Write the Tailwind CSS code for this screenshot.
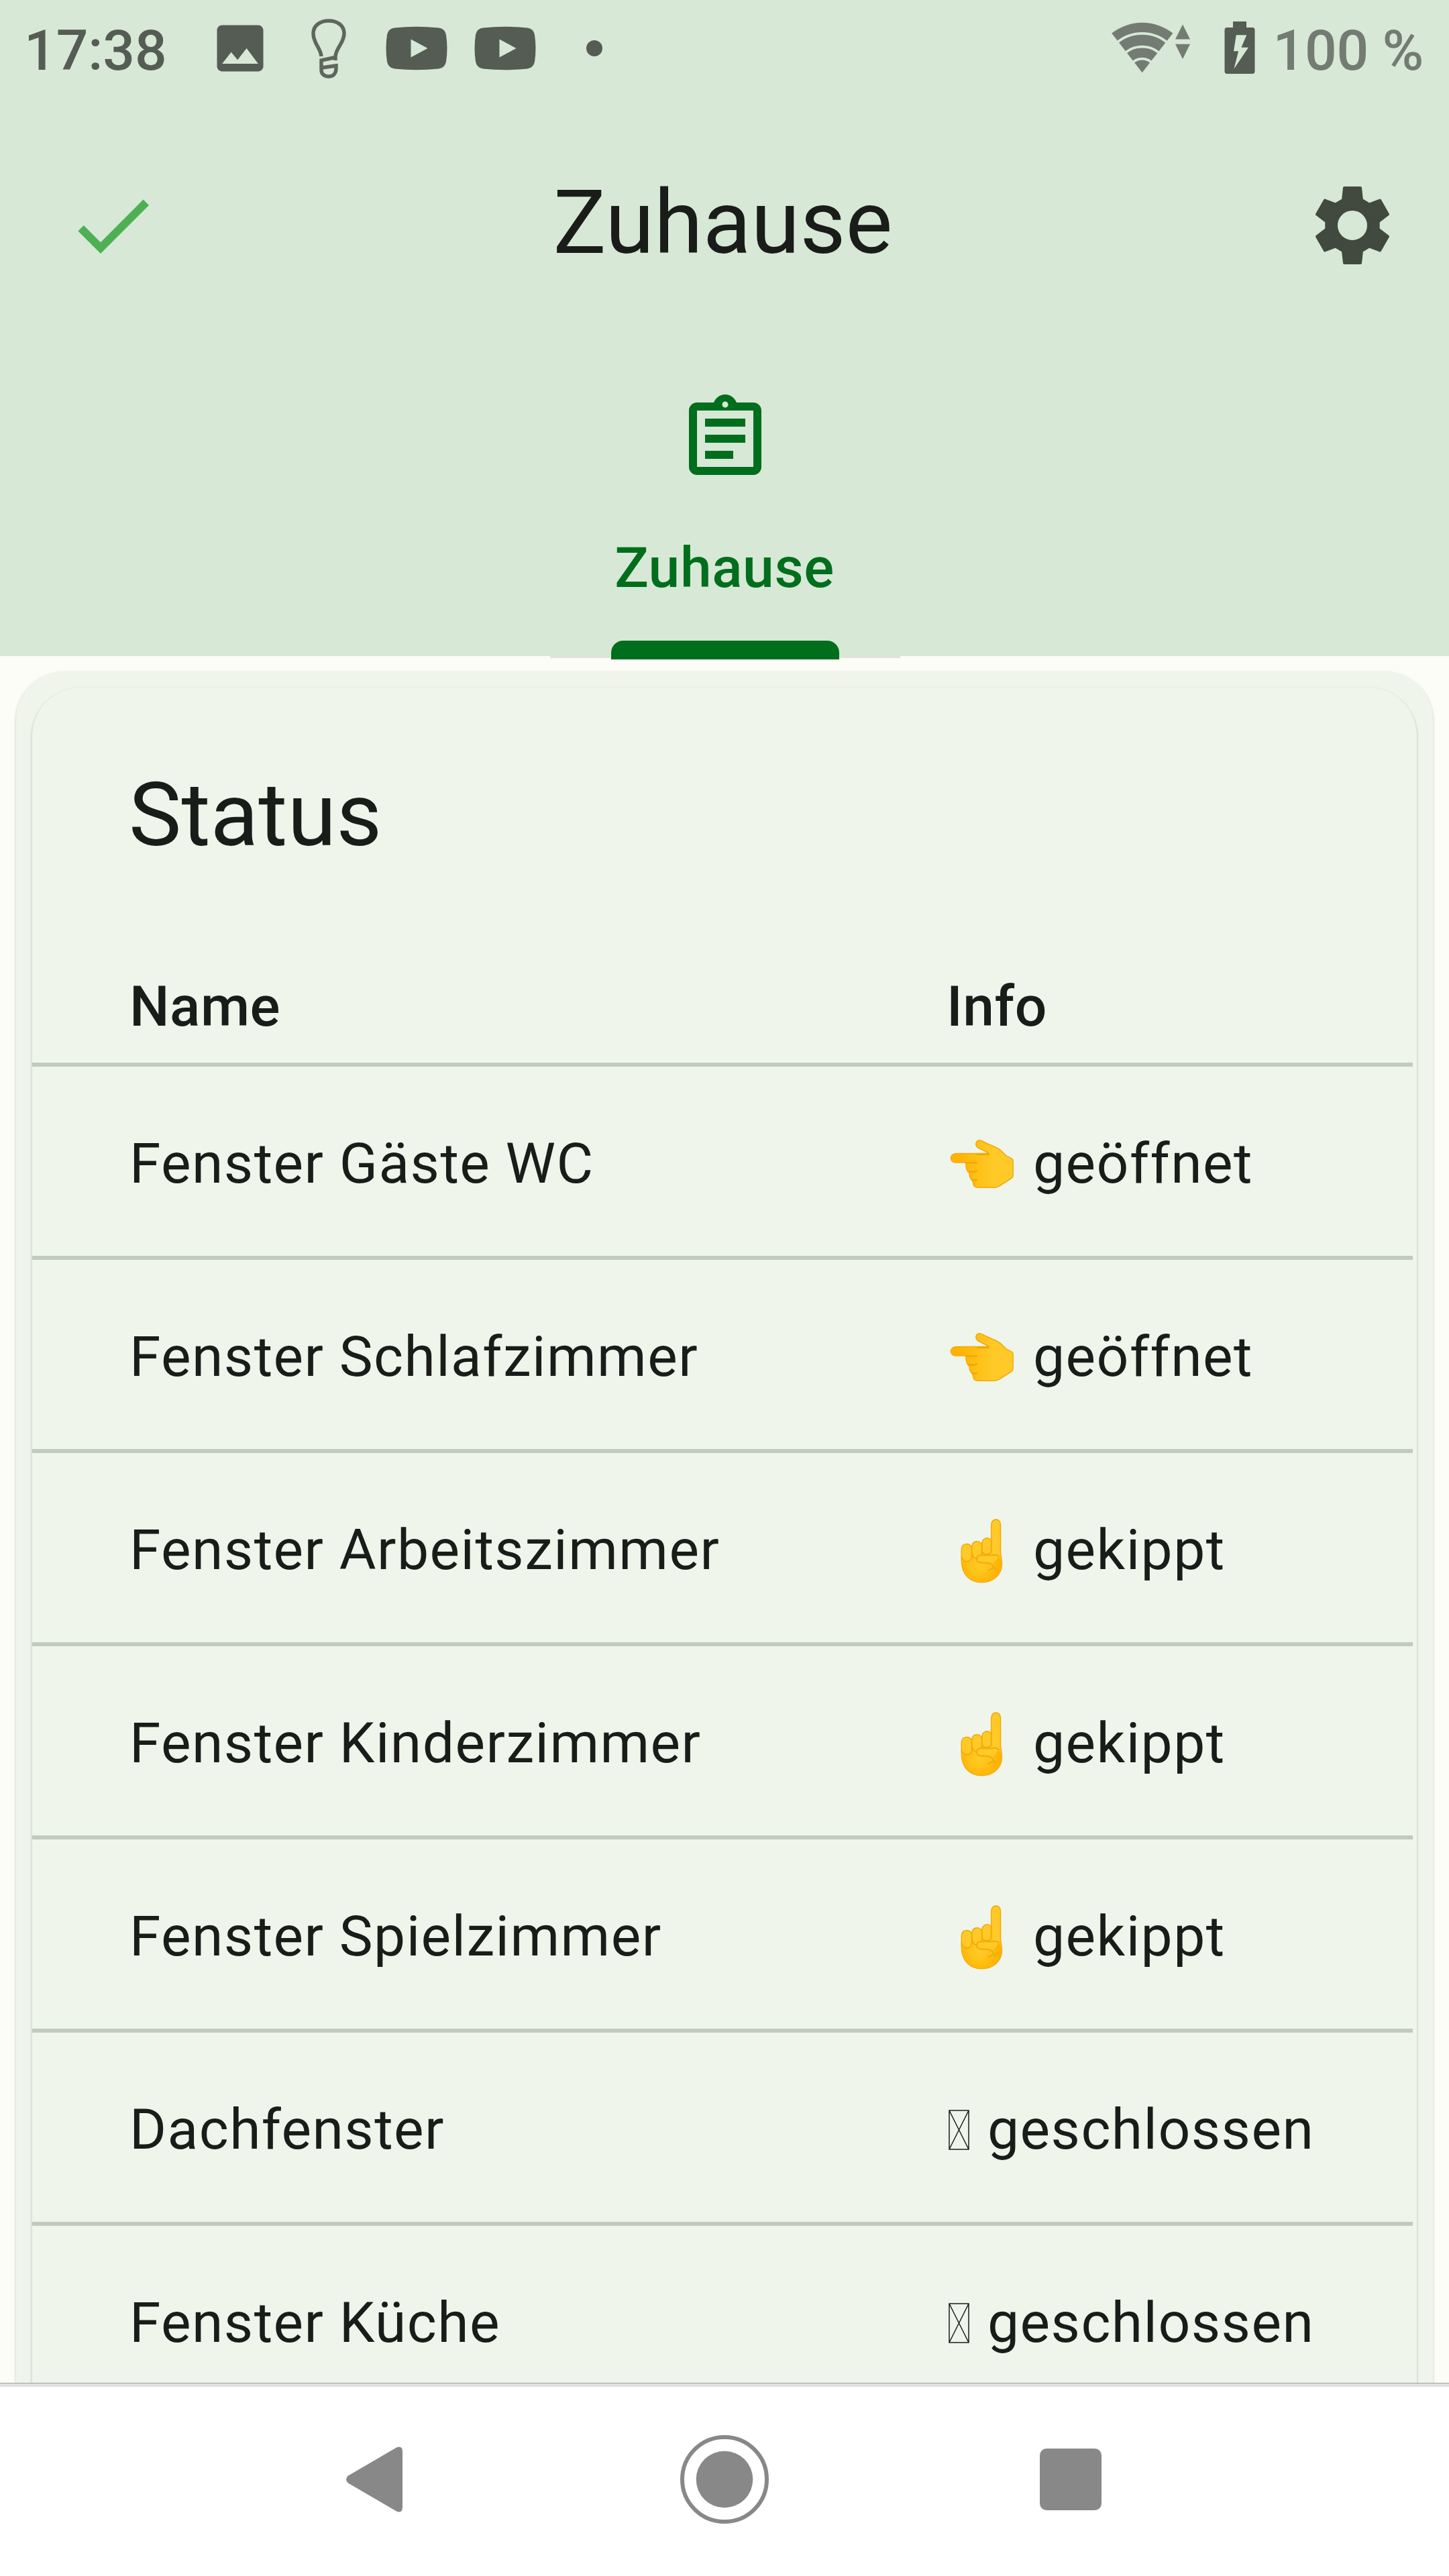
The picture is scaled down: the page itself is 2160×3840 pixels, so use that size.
<!DOCTYPE html>
<html lang="de">
<head>
<meta charset="utf-8">
<title>Zuhause</title>
<script src="https://cdn.jsdelivr.net/npm/@tailwindcss/browser@4"></script>
</head>
<body class="bg-[#fcfdf6] font-['Roboto',sans-serif] text-[#1a1c19]">
<!-- Shared icon definitions -->
<svg class="absolute size-0">
  <defs>
    <linearGradient id="skin-left" x1="0" x2="1" y1="0" y2="0"><stop offset="0.1" stop-color="#ffb300"/><stop offset="0.7" stop-color="#ffca28"/></linearGradient>
    <radialGradient id="skin-up" gradientUnits="userSpaceOnUse" cx="42" cy="72" r="30"><stop offset="0" stop-color="#ffca28"/><stop offset="0.4" stop-color="#ffc41c"/><stop offset="1" stop-color="#ffb300"/></radialGradient>
    <symbol id="hand-left" viewBox="0 0 104 80">
      <path fill="url(#skin-left)" stroke="#f4aa0b" stroke-width="1.600" stroke-linejoin="round" d="M13 24.500L62 24.500C58 21 50 18.500 45.500 15.500C41 12 42.500 5.500 47.800 4.700C51 4.700 54 7 57 8.500L75 16.500C82 20 86 28 91 29.500C94 31 98 32 98 35V57C98 60 97 61 94 62.500L80 71.500C75 75 72 75.300 66 75.300H45C39 75 39 70 37.800 65C34 62 33 58 33 54C28.500 50 27.500 44 28 38H13C3 38 3 25 13 24.500z"/>
      <path fill="none" stroke="#eda600" stroke-width="2.200" stroke-linecap="round" d="M45 26H62M28 38.500H44M33 51Q38 53 44 50.500M37 64Q41 65 44 63.500"/>
    </symbol>
    <symbol id="hand-up" viewBox="0 0 82 100">
      <path fill="#ffca28" stroke="#f4aa0b" stroke-width="1.600" stroke-linejoin="round" d="M59.700 12C59.700 1.500 73.500 1.500 73.500 12V54C74 60 75.600 64 75.400 71C75 87 62 97.700 45 97.700C28 97.700 15.300 86 15.300 65V49C15.300 39 27 38 30.600 46C30.600 35 43 34 45.500 42C46 30 57 29.500 59.700 36z"/>
      <path fill="url(#skin-up)" d="M16 66Q31 67 31.500 61Q38 68 46 56L60 56Q73 56 74.500 68Q76 96 45 97Q18 96 16 66z"/>
      <path fill="none" stroke="#f4aa0b" stroke-width="2" stroke-linecap="round" stroke-linejoin="round" d="M30.600 46V60C30 69 17 69 15.500 60M45.700 42V54C45 60 41 63 38 62.500C33 62 31.500 58 31 54M59.700 36V52C58 57 48 57 46 52"/>
      <path fill="#ffca28" stroke="#f4aa0b" stroke-width="2" stroke-linecap="round" stroke-linejoin="round" d="M71 59C67 55.500 63 57 59 57.200H44C36 57.200 36 68.500 44 68.500C51 68.500 60 67 63 75C60.500 78 58 79 55 80M63 75L66 79.500"/>
    </symbol>
    <symbol id="missing-glyph" viewBox="0 0 31 60">
      <path fill="none" stroke="#1a1c19" stroke-width="1.500" d="M1 1h29v58H1zM1 1l29 58M30 1L1 59"/>
    </symbol>
    <symbol id="video" viewBox="0 0 92 66">
      <path fill="#555c54" d="M13 2.500Q46-1 79 2.500Q88 3.500 90 13Q93 33 90 53Q88 62.500 79 63.500Q46 67 13 63.500Q4 62.500 2 53Q-1 33 2 13Q4 3.500 13 2.500z"/><path fill="#d7e8d6" d="M37.500 19.500v27L62.500 33z"/>
    </symbol>
  </defs>
</svg>
<div class="flex h-[3840px] w-[2160px] flex-col overflow-hidden">

  <!-- Status bar -->
  <div class="flex h-36 shrink-0 items-center bg-[#d7e8d6] pl-9 text-[84px] leading-[84px] text-[#555c54]">
    <span class="w-[276px] pt-[7px] font-medium tracking-[-0.100px]">17:38</span>
    <svg class="size-[92px] shrink-0" viewBox="0 0 24 24" fill="currentColor"><path d="M21 19V5c0-1.100-.9-2-2-2H5c-1.100 0-2 .9-2 2v14c0 1.100.9 2 2 2h14c1.100 0 2-.9 2-2zM8.500 13.500l2.500 3.010L14.500 12l4.500 6H5l3.500-4.500z"/></svg>
    <svg class="mt-[2px] ml-14 h-[92px] w-[60px] shrink-0" viewBox="0 0 60 92" fill="none" stroke="#5f665e" stroke-width="5.500"><path d="M19 57C18 44 7 38 7 23C7 11 17 4 30 4s23 7 23 19c0 14-12 21-13 34v6M42 58l-23 5v14c0 7 5 10 11 10s11-4 11-12v-4l-22 3"/></svg>
    <svg class="ml-[55px] h-[66px] w-[92px] shrink-0"><use href="#video"/></svg>
    <svg class="ml-10 h-[66px] w-[92px] shrink-0"><use href="#video"/></svg>
    <span class="ml-[75px] size-6 shrink-0 rounded-full bg-[#555c54]"></span>
    <svg class="ml-auto h-20 w-[120px] shrink-0" viewBox="0 0 120 80">
      <path fill="#737b72" d="M46.600 76.300L1.200 17.500A74.300 74.300 0 0 1 92.400 17.500z"/>
      <g fill="none" stroke="#d7e8d6" stroke-width="3.800"><path d="M6 34.500A58 58 0 0 1 87.200 34.500"/><path d="M17 51.500A38.600 38.600 0 0 1 76.200 51.500"/><path d="M30 64A20.600 20.600 0 0 1 63.200 64"/></g>
      <path fill="#737b72" d="M96 26.500L107 4.500l11 22zM96 33.700h22L107 56z"/>
    </svg>
    <svg class="ml-12 h-20 w-12 shrink-0" viewBox="0 0 48 80">
      <path fill="currentColor" d="M14 0h20v9h9q3.500 0 3.500 4v61q0 4-3.500 4H5q-3.500 0-3.500-4V13q0-4 3.500-4h9z"/>
      <path fill="#d7e8d6" d="M18.800 20.300h15.500l-7.900 18.400H37L15.400 70.700l6.800-26.400H15z"/>
    </svg>
    <span class="mr-[38px] ml-[26px] shrink-0 pt-[7px] font-medium tracking-[-0.3px] whitespace-nowrap text-[#737b72]">100 %</span>
  </div>

  <!-- App bar -->
  <header class="flex h-96 shrink-0 items-center justify-between bg-[#d7e8d6] pr-[72px] pl-24">
    <svg class="size-36" viewBox="0 0 24 24" fill="#4db053"><path d="M9 16.200L4.800 12l-1.400 1.400L9 19 21 7l-1.400-1.400z"/></svg>
    <h1 class="ml-[-29px] pb-2 text-[132px] leading-[132px]">Zuhause</h1>
    <svg class="size-36" viewBox="0 0 144 144" fill="#42493f" stroke="#42493f" stroke-width="4" stroke-linejoin="round"><path fill-rule="evenodd" d="M60 16h24l2 18 11 6.500 16-6L125 55.500 110.700 66.500v11L125 88.500 113 109.500l-16-6-11 6.500-2 18H60l-2-18-11-6.500-16 6L19 88.500 33.300 77.500v-11L19 55.500 31 34.500l16 6L58 34zM72 48a24 24 0 1 0 0 48a24 24 0 1 0 0-48z"/></svg>
  </header>

  <!-- Tabs -->
  <nav class="flex h-[450px] shrink-0 justify-center bg-[#d7e8d6] pl-0.5">
    <div class="relative flex w-[522px] flex-col items-center pt-[54px] text-[#006e1c]">
      <svg class="size-36" viewBox="0 0 24 24" fill="currentColor"><path d="M7 15h7v2H7zm0-4h10v2H7zm0-4h10v2H7zm12-4h-4.180C14.400 1.840 13.300 1 12 1c-1.300 0-2.400.84-2.820 2H5c-1.100 0-2 .9-2 2v14c0 1.100.9 2 2 2h14c1.100 0 2-.9 2-2V5c0-1.100-.9-2-2-2zm-7-.25c.41 0 .75.34.75.75s-.34.75-.75.75-.75-.34-.75-.75.34-.75.75-.75zM19 19H5V5h14v14z"/></svg>
      <span class="mt-[79px] pr-0.5 text-[84px] leading-[84px] font-medium tracking-[0.6px]">Zuhause</span>
      <div class="absolute inset-x-0 top-[449px] h-1 bg-[#dee4d9]"></div>
      <div class="absolute top-[427px] left-[91px] h-7 w-[340px] rounded-t-[18px] bg-[#006e1c]"></div>
    </div>
  </nav>

  <!-- Content -->
  <main class="h-[2574px] shrink-0 overflow-hidden px-6 pt-[23px]">
    <div class="h-[2800px] rounded-t-[72px] bg-[#eff5eb] px-6 pt-6 shadow-[0_2px_4px_rgba(0,0,0,0.22)]">
      <section class="h-[2800px] rounded-t-[72px] bg-[#eff5eb] pt-[122px] shadow-[0_2px_4px_rgba(0,0,0,0.24)]">
        <h2 class="pl-[144px] text-[132px] leading-[136px]">Status</h2>
        <div class="mr-1.5 text-[84px] leading-[84px] tracking-[1.45px]">
          <div class="flex h-[307px] items-end border-b-[6px] border-[#c2c9bd] pb-[41px] pl-[145px] font-medium tracking-[0.5px]">
            <span class="w-[1218px]">Name</span><span>Info</span>
          </div>
          <div class="flex h-72 items-center border-b-[6px] border-[#c2c9bd] pt-2 pl-[145px]">
            <span class="w-[1218px]">Fenster Gäste WC</span>
            <svg class="mr-6 ml-px h-20 w-[104px]"><use href="#hand-left"/></svg>
            <span>geöffnet</span>
          </div>
          <div class="flex h-72 items-center border-b-[6px] border-[#c2c9bd] pt-2 pl-[145px]">
            <span class="w-[1218px]">Fenster Schlafzimmer</span>
            <svg class="mr-6 ml-px h-20 w-[104px]"><use href="#hand-left"/></svg>
            <span>geöffnet</span>
          </div>
          <div class="flex h-72 items-center border-b-[6px] border-[#c2c9bd] pt-2 pl-[145px]">
            <span class="w-[1218px]">Fenster Arbeitszimmer</span>
            <svg class="mr-10 ml-[7px] h-[100px] w-[82px]"><use href="#hand-up"/></svg>
            <span>gekippt</span>
          </div>
          <div class="flex h-72 items-center border-b-[6px] border-[#c2c9bd] pt-2 pl-[145px]">
            <span class="w-[1218px]">Fenster Kinderzimmer</span>
            <svg class="mr-10 ml-[7px] h-[100px] w-[82px]"><use href="#hand-up"/></svg>
            <span>gekippt</span>
          </div>
          <div class="flex h-72 items-center border-b-[6px] border-[#c2c9bd] pt-2 pl-[145px]">
            <span class="w-[1218px]">Fenster Spielzimmer</span>
            <svg class="mr-10 ml-[7px] h-[100px] w-[82px]"><use href="#hand-up"/></svg>
            <span>gekippt</span>
          </div>
          <div class="flex h-72 items-center border-b-[6px] border-[#c2c9bd] pt-2 pl-[145px]">
            <span class="w-[1218px]">Dachfenster</span>
            <svg class="mr-[27px] ml-[3px] h-[60px] w-[31px]"><use href="#missing-glyph"/></svg>
            <span>geschlossen</span>
          </div>
          <div class="flex h-72 items-center border-b-[6px] border-[#c2c9bd] pt-2 pl-[145px]">
            <span class="w-[1218px]">Fenster Küche</span>
            <svg class="mr-[27px] ml-[3px] h-[60px] w-[31px]"><use href="#missing-glyph"/></svg>
            <span>geschlossen</span>
          </div>
        </div>
      </section>
    </div>
  </main>

  <!-- Navigation bar -->
  <footer class="h-72 shrink-0 border-t border-[#a0a39e] bg-white">
    <div class="h-[5px] bg-[#e0e0e0]"></div>
    <div class="flex h-[276px] items-center pl-[516px]">
      <svg class="h-[98px] w-[84px]" viewBox="0 0 84 98" fill="#888"><path d="M3 43.500L75 1.500Q84-2 84 8v82q0 10-9 6.500L3 54.500Q-3 49 3 43.500z"/></svg>
      <svg class="ml-[414px] size-[132px]" viewBox="0 0 132 132"><circle cx="66" cy="66" r="63" fill="none" stroke="#888" stroke-width="6"/><circle cx="66" cy="66" r="42.300" fill="#888"/></svg>
      <div class="ml-[404px] size-[92px] rounded-[10px] bg-[#888]"></div>
    </div>
  </footer>
</div>
</body>
</html>
